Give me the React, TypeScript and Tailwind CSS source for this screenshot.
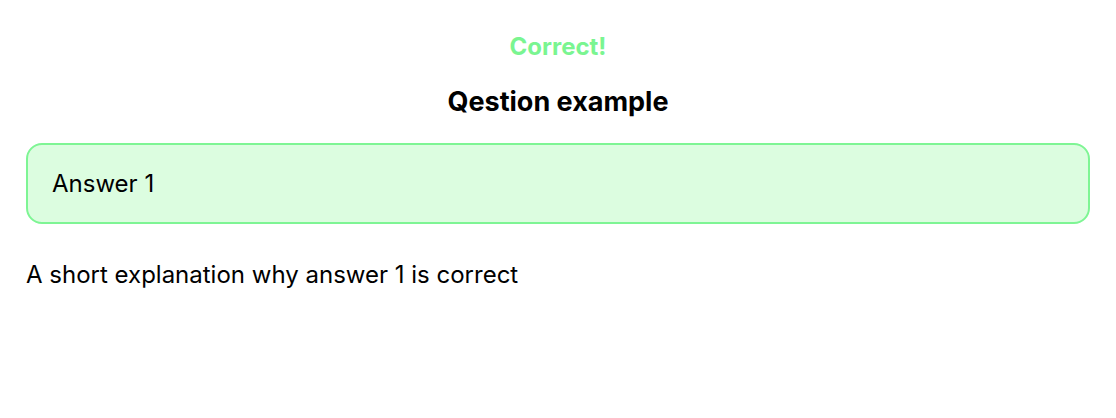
export default function App() {
    return (
        <div className="min-h-screen bg-white px-[26px] pt-[31px] font-['Inter',sans-serif] text-black">
            <p className="text-center text-[24px] font-bold leading-[32px] text-[#7af591]">Correct!</p>
            <h1 className="mt-[21px] text-center text-[27px] font-bold leading-[36px]">Qestion example</h1>
            <div className="mt-[23px] flex h-[81px] items-center rounded-[16px] border-2 border-[#7ef594] bg-[#dcfde0] px-[24px]">
                <span className="text-[24px] leading-[32px]">Answer 1</span>
            </div>
            <p className="mt-[35px] text-[24px] leading-[32px]">A short explanation why answer 1 is correct</p>
        </div>
    );
}
